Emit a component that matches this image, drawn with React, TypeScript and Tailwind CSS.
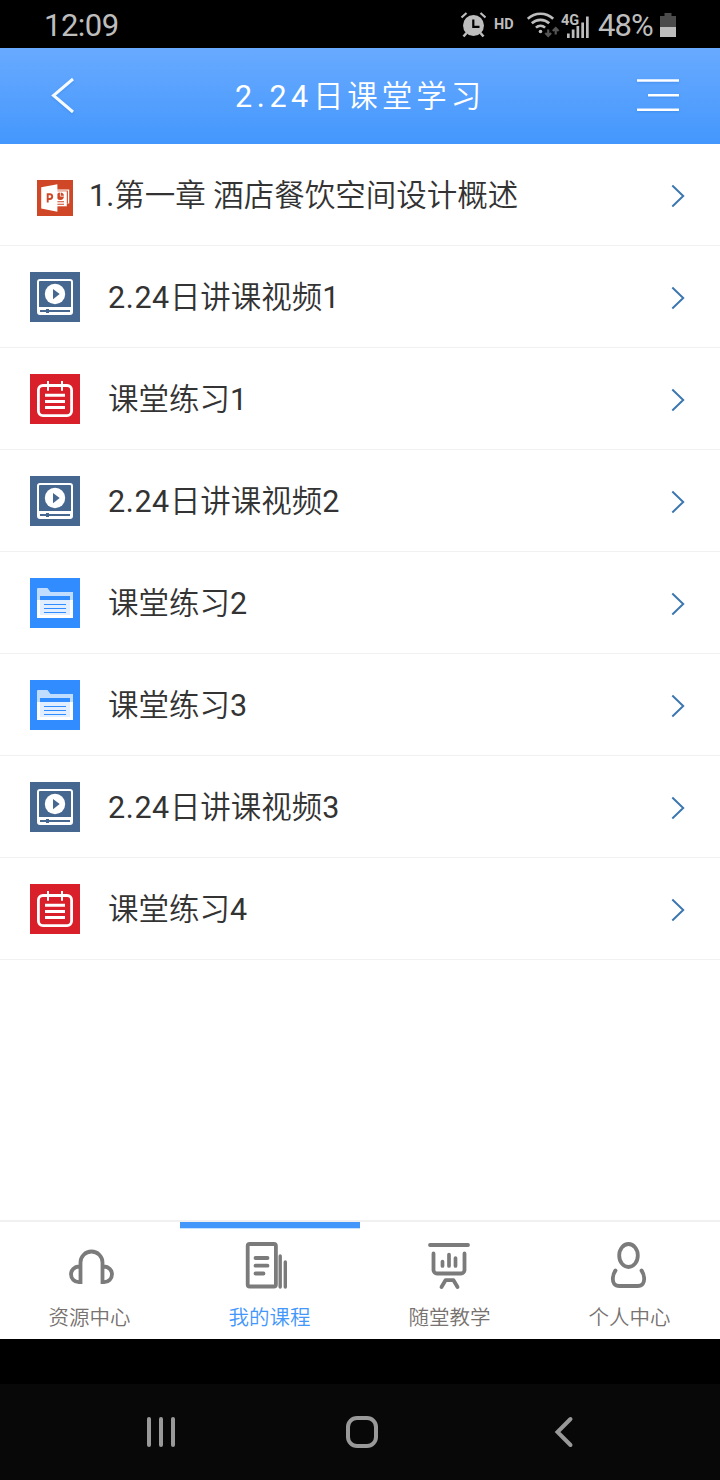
import React from 'react';

type Kind = 'ppt' | 'video' | 'exercise' | 'folder';

const lessons: { kind: Kind; date?: string; title: string }[] = [
  { kind: 'ppt', title: '1.第一章 酒店餐饮空间设计概述' },
  { kind: 'video', date: '2.24', title: '日讲课视频1' },
  { kind: 'exercise', title: '课堂练习1' },
  { kind: 'video', date: '2.24', title: '日讲课视频2' },
  { kind: 'folder', title: '课堂练习2' },
  { kind: 'folder', title: '课堂练习3' },
  { kind: 'video', date: '2.24', title: '日讲课视频3' },
  { kind: 'exercise', title: '课堂练习4' },
];

function PptIcon() {
  return (
    <svg className="block h-9 w-9" viewBox="0 0 36 36">
      <rect width="36" height="36" fill="#d04727" />
      <path d="M20 9.500h12.200v14H20z" fill="#fff" />
      <path d="M20 10.600h10.900v12.900H20z" fill="#d04727" />
      <path d="M20 11.300h9.800v15H20z" fill="#fff" />
      <circle cx="23.200" cy="16.200" r="3.700" fill="#d04727" />
      <path d="M23.400 12v4.200h4" fill="none" stroke="#fff" strokeWidth=".8" />
      <path d="M20 21.800h7M20 24.300h7" stroke="#d04727" strokeWidth="1.100" />
      <path d="M4.200 7.200 20.400 4.300v27.400L4.200 28.600z" fill="#fff" />
      <path d="M10.700 22.600v-8.400h2.100a2.400 2.400 0 0 1 0 4.800h-2.100" fill="none" stroke="#d04727" strokeWidth="1.900" />
    </svg>
  );
}

function VideoIcon() {
  return (
    <svg className="block h-[50px] w-[50px]" viewBox="0 0 50 50">
      <rect width="50" height="50" fill="#456790" />
      <rect x="8" y="8" width="34" height="34" rx="2" fill="none" stroke="#fff" strokeWidth="2" />
      <path d="M8 35h34v5.500a1.500 1.500 0 0 1-1.500 1.500h-31A1.500 1.500 0 0 1 8 40.500z" fill="#fff" />
      <circle cx="25" cy="22" r="10.200" fill="#fff" />
      <path d="M23 17v10.200l6.700-5.100z" fill="#456790" />
      <path d="M10 39h30" stroke="#456790" strokeWidth="2" />
      <rect x="16" y="37" width="3" height="4" fill="#456790" />
    </svg>
  );
}

function ExerciseIcon() {
  return (
    <svg className="block h-[50px] w-[50px]" viewBox="0 0 50 50">
      <rect width="50" height="50" fill="#d91f29" />
      <rect x="8.400" y="11.500" width="33.200" height="30.100" rx="4.500" fill="none" stroke="#fff" strokeWidth="2.800" />
      <path d="M18 7v9.700M32 7v9.700" stroke="#fff" strokeWidth="2" />
      <path d="M15 21.300h20M15 27.500h20M15 33.500h20" stroke="#fff" strokeWidth="3" />
    </svg>
  );
}

function FolderIcon() {
  return (
    <svg className="block h-[50px] w-[50px]" viewBox="0 0 50 50">
      <rect width="50" height="50" fill="#318cff" />
      <path d="M7 11a1 1 0 0 1 1-1h9.500l3 4H43v8H7z" fill="#c0dcff" />
      <path d="M10 18h30v4H10z" fill="#318cff" />
      <path d="M7 22h36v18H7z" fill="#fff" />
      <path d="M10 22h30v15H10z" fill="#e0eeff" />
      <path d="M14 26.500h22M14 30.500h22M14 34.500h22" stroke="#318cff" strokeWidth="1" />
    </svg>
  );
}

function Chevron() {
  return (
    <svg className="block h-6 w-4 shrink-0" viewBox="0 0 16 24" fill="none">
      <path d="M2.300 1.500 13.200 12 2.300 22.500" stroke="#3d77b0" strokeWidth="2" />
    </svg>
  );
}

function LessonRow({ kind, date, title }: { kind: Kind; date?: string; title: string }) {
  return (
    <li className="flex h-[102px] items-center border-b border-[#f1f1f1] pr-[34px] pl-[30px]">
      {kind === 'ppt' ? (
        <div className="w-[59px] pt-[7px] pl-[7px]"><PptIcon /></div>
      ) : (
        <div className="w-[78px] pt-px">
          {kind === 'video' && <VideoIcon />}
          {kind === 'exercise' && <ExerciseIcon />}
          {kind === 'folder' && <FolderIcon />}
        </div>
      )}
      <span className="flex-1 pt-[3px] text-[30.5px] leading-[50px] whitespace-nowrap text-[#333]">
        {date && <span className="tracking-[0.6px]">{date}</span>}
        {title}
      </span>
      <div className="pt-[3px]"><Chevron /></div>
    </li>
  );
}

function StatusBar() {
  return (
    <div className="flex h-12 items-center bg-black pl-[44px] text-[#bdbdbd]">
      <span className="w-[416px] shrink-0 pt-[3px] text-[31px] leading-[44px] tracking-[-0.5px]">12:09</span>
      <svg className="mt-[2px] block h-[26px] w-[26px] shrink-0" viewBox="0 0 26 26" fill="none" stroke="#bdbdbd">
        <circle cx="13.500" cy="13.500" r="10.500" fill="#bdbdbd" stroke="none" />
        <path d="M1.500 5.500 6.500 1M20.500 1l5 4.500" strokeWidth="2.200" />
        <path d="m6.500 21-3 3.500M20.500 21l3 3.500" strokeWidth="2.600" />
        <path d="M13.300 7.500v7.300h6.200" stroke="#000" strokeWidth="2.200" />
      </svg>
      <span className="w-[41px] shrink-0 pt-[2px] pl-2 text-[14.5px] font-bold">HD</span>
      <svg className="mt-[2px] block h-[28px] w-[33px] shrink-0" viewBox="0 0 33 28" fill="none" stroke="#bdbdbd" strokeWidth="2.600">
        <path d="M.8 7.800a18.500 18.500 0 0 1 25.400 0M4.800 12.300a12.700 12.700 0 0 1 17.400 0M8.900 16.600a6.900 6.900 0 0 1 9.200 0" />
        <circle cx="13.500" cy="20.500" r="1.800" fill="#bdbdbd" stroke="none" />
        <path d="M21.200 18.500v6.500M18.300 22l2.900 3 2.900-3M28.700 23.500V17M25.800 20l2.900-3 2.900 3" stroke="#555" strokeWidth="2.200" />
      </svg>
      <svg className="block h-[30px] w-[30px] shrink-0" viewBox="0 0 30 30">
        <text x="1" y="15.500" fontSize="14.500" fontWeight="700" fill="#bdbdbd" className="font-[Roboto]">4G</text>
        <path d="M7 24.500h2.700V29H7zM11.800 20.500h2.700V29h-2.700zM16.500 17h2.700v12h-2.700zM21.300 13.500H24V29h-2.700zM26 7.500h2.700V29H26z" fill="#bdbdbd" />
      </svg>
      <span className="w-[70px] shrink-0 pt-[3px] pl-2 text-[31px] leading-[44px] tracking-[-0.9px]">48%</span>
      <svg className="mt-[2px] block h-[24px] w-4 shrink-0" viewBox="0 0 16 24">
        <path d="M4.500 0h7v3H16v11H0V3h4.500z" fill="#4b4b4b" />
        <path d="M0 14h16v10H0z" fill="#bdbdbd" />
      </svg>
    </div>
  );
}

function Header() {
  return (
    <header className="grid h-24 grid-cols-[184px_1fr_43px] items-center bg-linear-to-b from-[#68aaff] to-[#4397fd] pr-[40px] pl-[51px]">
      <svg className="block h-10 w-[43px] drop-shadow-[0_1px_1px_#2d7cdc80]" viewBox="0 0 43 40" fill="none">
        <path d="M22 3 2.500 19.500 22 36" stroke="#f4faff" strokeWidth="3" />
      </svg>
      <h1 className="pt-[2px] text-[30.5px] leading-[50px] tracking-[4px] text-white">
        <span className="tracking-[4.6px]">2.24</span>日课堂学习
      </h1>
      <svg className="block h-10 w-[43px] drop-shadow-[0_1px_1px_#2d7cdc80]" viewBox="0 0 43 40" fill="none">
        <path d="M0 4.500h42M11 19.200h31M0 33.800h42" stroke="#fff" strokeWidth="2.600" />
      </svg>
    </header>
  );
}

const tabIcons = [
  <g key="headphones">
    <path d="M21.500 47.500V26a11 11 0 0 1 22 0v21.500M23.400 45.600h-3.600a7.800 7.800 0 0 1 0-15.600h1.700M41.600 45.600h3.600a7.800 7.800 0 0 0 0-15.600h-1.700" />
  </g>,
  <g key="book">
    <rect x="17.700" y="8.500" width="28.200" height="42.500" rx="2" />
    <path d="M25.500 22.500h12M25.500 30.200h12M25.500 38h8" strokeLinecap="round" />
    <path d="M50.200 20.500V51.500M55.300 26.500V51.500" strokeLinecap="round" strokeWidth="3.400" />
  </g>,
  <g key="board" strokeLinecap="round" strokeLinejoin="round">
    <path d="M20 10.500h38M23.500 19v16.500a3.500 3.500 0 0 0 3.500 3.500h24a3.500 3.500 0 0 0 3.500-3.500V19" />
    <path d="M32.500 27v4.500M39 20v11.500M45.500 23.500v8" strokeWidth="3.700" />
    <path d="m31.500 52.500 4-6.800h8l4 6.800" />
  </g>,
  <g key="person" strokeLinecap="round">
    <ellipse cx="38.500" cy="20.500" rx="9.300" ry="11.500" />
    <path d="M25.500 35.500c-3 4-3.500 10.500-1.300 13.300 1.200 1.600 3 2.200 5.300 2.200h18c2.300 0 4.100-.6 5.300-2.200 2.200-2.800 1.700-9.300-1.300-13.300" />
  </g>,
];

const tabs = ['资源中心', '我的课程', '随堂教学', '个人中心'];

function TabBar() {
  return (
    <nav className="grid h-[119px] grid-cols-4 border-t-2 border-[#f0f0f0] bg-white">
      {tabs.map((label, i) => (
        <div key={label} className="flex flex-col items-center">
          <div className={i === 1 ? 'h-[7px] w-full border-b border-[#c5e2ff] bg-[#4397fb]' : 'h-[7px] w-full'} />
          <svg
            className="block h-[70px] w-[78px]"
            viewBox={['-8 -7.5 78 70', '1 -6.5 78 70', '1 -5.5 78 70', '1 -6 78 70'][i]}
            fill="none"
            stroke="#7b7b7b"
            strokeWidth="3.800"
          >
            {tabIcons[i]}
          </svg>
          <span className={i === 1 ? '-ml-px -mt-px text-[20.5px] leading-[40px] text-[#4397fb]' : '-ml-px -mt-px text-[20.5px] leading-[40px] text-[#77726f]'}>
            {label}
          </span>
        </div>
      ))}
    </nav>
  );
}

function SystemNav() {
  return (
    <div className="flex h-24 items-center bg-[#080808] pl-[147px]">
      <svg className="block h-8 w-7" viewBox="0 0 28 32" stroke="#999" strokeWidth="4" strokeLinecap="round">
        <path d="M2 3v26M14 3v26M26 3v26" />
      </svg>
      <svg className="ml-[171px] block h-8 w-8" viewBox="0 0 32 32" fill="none">
        <rect x="2" y="2" width="28" height="28" rx="9" stroke="#999" strokeWidth="4" />
      </svg>
      <svg className="ml-[176px] block h-8 w-[20px]" viewBox="0 0 20 32" fill="none">
        <path d="M16.500 3 3.500 16l13 13" stroke="#999" strokeWidth="4" strokeLinecap="round" />
      </svg>
    </div>
  );
}

export default function App() {
  return (
    <div className="flex h-[1480px] w-[720px] flex-col overflow-hidden bg-white font-[Roboto,'Noto_Sans_CJK_SC_DemiLight','Noto_Sans_CJK_SC_Light','Noto_Sans_CJK_SC',sans-serif]">
      <StatusBar />
      <Header />
      <ul className="flex-1">
        {lessons.map((l) => (
          <LessonRow key={(l.date ?? '') + l.title} {...l} />
        ))}
      </ul>
      <TabBar />
      <div className="h-[45px] bg-black" />
      <SystemNav />
    </div>
  );
}
